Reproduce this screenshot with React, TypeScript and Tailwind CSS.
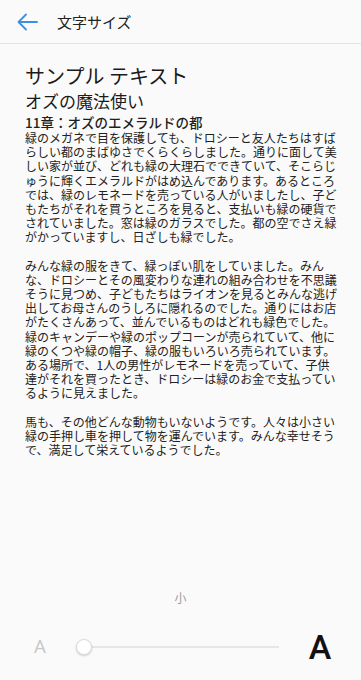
const p1 = [
  '緑のメガネで目を保護しても、ドロシーと友人たちはすば',
  'らしい都のまばゆさでくらくらしました。通りに面して美',
  'しい家が並び、どれも緑の大理石でできていて、そこらじ',
  'ゅうに輝くエメラルドがはめ込んであります。あるところ',
  'では、緑のレモネードを売っている人がいましたし、子ど',
  'もたちがそれを買うところを見ると、支払いも緑の硬貨で',
  'されていました。窓は緑のガラスでした。都の空でさえ緑',
  'がかっていますし、日ざしも緑でした。',
];

const p2 = [
  'みんな緑の服をきて、緑っぽい肌をしていました。みん',
  'な、ドロシーとその風変わりな連れの組み合わせを不思議',
  'そうに見つめ、子どもたちはライオンを見るとみんな逃げ',
  '出してお母さんのうしろに隠れるのでした。通りにはお店',
  'がたくさんあって、並んでいるものはどれも緑色でした。',
  '緑のキャンデーや緑のポップコーンが売られていて、他に',
  '緑のくつや緑の帽子、緑の服もいろいろ売られています。',
  'ある場所で、1人の男性がレモネードを売っていて、子供',
  '達がそれを買ったとき、ドロシーは緑のお金で支払ってい',
  'るように見えました。',
];

const p3 = [
  '馬も、その他どんな動物もいないようです。人々は小さい',
  '緑の手押し車を押して物を運んでいます。みんな幸せそう',
  'で、満足して栄えているようでした。',
];

function Para({ lines }: { lines: string[] }) {
  return (
    <div className="mb-[14px]">
      {lines.map((l, i) => (
        <div key={i} className="whitespace-nowrap">
          {l}
        </div>
      ))}
    </div>
  );
}

export default function App() {
  return (
    <div
      className="w-[361px] h-[680px] bg-[#fafafa] text-[#1f1f1f] flex flex-col overflow-hidden"
      style={{ fontFamily: '"Noto Sans CJK JP", "Noto Sans", sans-serif' }}
    >
      <div className="h-[44px] flex items-center border-b border-[#e2e2e2] shrink-0">
        <svg
          className="ml-[17px]"
          width="21"
          height="18"
          viewBox="0 0 21 18"
          fill="none"
          stroke="#3f8fe0"
          strokeWidth="1.8"
          strokeLinecap="round"
          strokeLinejoin="round"
        >
          <path d="M20 9H2M9 1.5L1.5 9L9 16.5" />
        </svg>
        <span className="ml-[19px] text-[15px] leading-[20px] text-[#222]">文字サイズ</span>
      </div>

      <div className="px-[25px] pt-[19px]">
        <div className="text-[20px] leading-[26px] text-[#1a1a1a]">サンプル テキスト</div>
        <div className="text-[17px] leading-[22px] mt-[1px] text-[#1a1a1a]">オズの魔法使い</div>
        <div className="text-[13.5px] leading-[18px] font-medium mt-[1px]">11章：オズのエメラルドの都</div>
        <div className="text-[12px] leading-[14.2px] text-[#222]">
          <Para lines={p1} />
          <Para lines={p2} />
          <Para lines={p3} />
        </div>
      </div>

      <div className="mt-auto pb-[18px]">
        <div className="text-center text-[12px] leading-[16px] text-[#9a9a9a]">小</div>
        <div className="flex items-center mt-[26px] h-[30px]">
          <span
            className="w-[80px] text-center text-[19px] leading-[30px] text-[#c9c9c9]"
            style={{ fontFamily: 'Roboto, "Noto Sans", sans-serif' }}
          >
            A
          </span>
          <div className="relative flex-1 h-[18px] flex items-center">
            <div className="h-[2px] w-full bg-[#e6e6e6] ml-[2px]" />
            <div className="absolute left-[-4px] top-[1px] w-[16px] h-[16px] rounded-full bg-white border border-[#dcdcdc] shadow-[0_1px_2px_rgba(0,0,0,0.18)]" />
          </div>
          <span
            className="w-[82px] text-center text-[34px] leading-[30px] text-[#111] font-medium"
            style={{ fontFamily: 'Roboto, "Noto Sans", sans-serif' }}
          >
            A
          </span>
        </div>
      </div>
    </div>
  );
}
